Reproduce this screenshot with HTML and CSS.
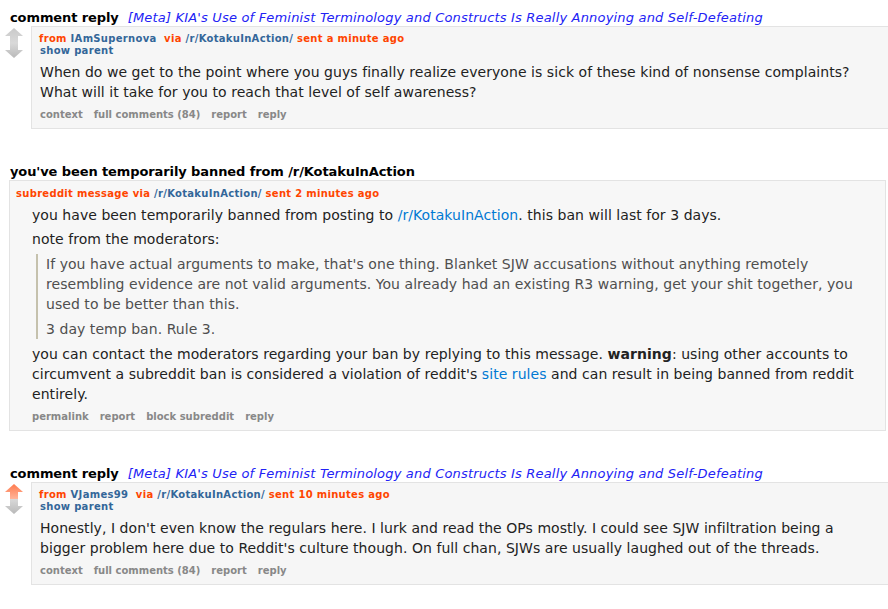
FILE: index.html
```html
<!DOCTYPE html>
<html>
<head>
<meta charset="utf-8">
<link rel="stylesheet" href="styles.css">
</head>
<body>
<div class="thing comment-thing">
  <p class="subject"><span class="kind">comment reply</span><a class="title" href="#">[Meta] KIA's Use of Feminist Terminology and Constructs Is Really Annoying and Self-Defeating</a></p>
  <div class="row">
    <div class="midcol">
      <svg class="arrow" width="18" height="15" viewBox="0 0 18 15"><defs><linearGradient id="g1" x1="0" y1="0" x2="0" y2="1"><stop offset="0" stop-color="#c9c9c9"/><stop offset="1" stop-color="#d9d9d9"/></linearGradient></defs><path d="M9 0 L18 8 L13 8 L13 15 L5 15 L5 8 L0 8 Z" fill="url(#g1)"/></svg>
      <svg class="arrow" width="18" height="15" viewBox="0 0 18 15"><defs><linearGradient id="g2" x1="0" y1="0" x2="0" y2="1"><stop offset="0" stop-color="#d9d9d9"/><stop offset="1" stop-color="#b9b9b9"/></linearGradient></defs><path d="M5 0 L13 0 L13 7 L18 7 L9 15 L0 7 L5 7 Z" fill="url(#g2)"/></svg>
    </div>
    <div class="entry">
      <p class="tagline"><span class="or">from</span> <a class="author" href="#">IAmSupernova</a>&nbsp; <span class="or">via</span> <a class="blue" href="#">/r/KotakuInAction/</a> <span class="or">sent a minute ago</span></p>
      <p class="parent"><a href="#">show parent</a></p>
      <div class="md">
        <p>When do we get to the point where you guys finally realize everyone is sick of these kind of nonsense complaints? What will it take for you to reach that level of self awareness?</p>
      </div>
      <ul class="buttons"><li>context</li><li>full comments (84)</li><li>report</li><li>reply</li></ul>
    </div>
  </div>
</div>

<div class="thing message-thing">
  <p class="subject"><span class="kind">you've been temporarily banned from /r/KotakuInAction</span></p>
  <div class="msgbox">
    <p class="tagline"><span class="or">subreddit message via</span> <a class="blue" href="#">/r/KotakuInAction/</a> <span class="or">sent 2 minutes ago</span></p>
    <div class="md msgmd">
      <p>you have been temporarily banned from posting to <a href="#">/r/KotakuInAction</a>. this ban will last for 3 days.</p>
      <p>note from the moderators:</p>
      <blockquote>
        <p>If you have actual arguments to make, that's one thing. Blanket SJW accusations without anything remotely resembling evidence are not valid arguments. You already had an existing R3 warning, get your shit together, you used to be better than this.</p>
        <p>3 day temp ban. Rule 3.</p>
      </blockquote>
      <p>you can contact the moderators regarding your ban by replying to this message. <strong>warning</strong>: using other accounts to circumvent a subreddit ban is considered a violation of reddit's <a href="#">site rules</a> and can result in being banned from reddit entirely.</p>
    </div>
    <ul class="buttons msgbuttons"><li>permalink</li><li>report</li><li>block subreddit</li><li>reply</li></ul>
  </div>
</div>

<div class="thing comment-thing">
  <p class="subject"><span class="kind">comment reply</span><a class="title" href="#">[Meta] KIA's Use of Feminist Terminology and Constructs Is Really Annoying and Self-Defeating</a></p>
  <div class="row">
    <div class="midcol">
      <svg class="arrow" width="18" height="15" viewBox="0 0 18 15"><defs><linearGradient id="g3" x1="0" y1="0" x2="0" y2="1"><stop offset="0" stop-color="#ff7a4d"/><stop offset="1" stop-color="#ffb59b"/></linearGradient></defs><path d="M9 0 L18 8 L13 8 L13 15 L5 15 L5 8 L0 8 Z" fill="url(#g3)"/></svg>
      <svg class="arrow" width="18" height="15" viewBox="0 0 18 15"><defs><linearGradient id="g4" x1="0" y1="0" x2="0" y2="1"><stop offset="0" stop-color="#d9d9d9"/><stop offset="1" stop-color="#b9b9b9"/></linearGradient></defs><path d="M5 0 L13 0 L13 7 L18 7 L9 15 L0 7 L5 7 Z" fill="url(#g4)"/></svg>
    </div>
    <div class="entry">
      <p class="tagline"><span class="or">from</span> <a class="author" href="#">VJames99</a>&nbsp; <span class="or">via</span> <a class="blue" href="#">/r/KotakuInAction/</a> <span class="or">sent 10 minutes ago</span></p>
      <p class="parent"><a href="#">show parent</a></p>
      <div class="md">
        <p>Honestly, I don't even know the regulars here. I lurk and read the OPs mostly. I could see SJW infiltration being a bigger problem here due to Reddit's culture though. On full chan, SJWs are usually laughed out of the threads.</p>
      </div>
      <ul class="buttons"><li>context</li><li>full comments (84)</li><li>report</li><li>reply</li></ul>
    </div>
  </div>
</div>
</body>
</html>
```

FILE: styles.css
```css
* { box-sizing: border-box; }
body {
  margin: 0;
  padding: 0;
  background: #fff;
  font-family: "DejaVu Sans", Verdana, sans-serif;
  color: #222;
  width: 888px;
  overflow: hidden;
}
a { text-decoration: none; }
p { margin: 0; }

.comment-thing { padding-top: 9px; }
.message-thing { padding-top: 34px; }
.message-thing + .comment-thing { padding-top: 34px; }

.subject {
  padding-left: 10px;
  font-size: 13px;
  line-height: 17px;
  white-space: nowrap;
}
.kind { font-weight: bold; color: #000; letter-spacing: -0.1px; }
.title {
  margin-left: 9px;
  font-style: italic;
  color: #2222f5;
  letter-spacing: 0.18px;
}

.row { display: flex; align-items: flex-start; }
.midcol {
  width: 31px;
  padding-left: 5px;
  padding-top: 2px;
  display: flex;
  flex-direction: column;
}
.arrow { display: block; }

.entry {
  flex: 1;
  background: #f6f6f6;
  border-top: 1px solid #e3e3e3;
  border-left: 1px solid #e3e3e3;
  border-bottom: 1px solid #e3e3e3;
  padding: 6px 0 6px 7px;
}

.tagline {
  font-size: 10px;
  line-height: 12px;
  font-weight: bold;
  letter-spacing: 0.3px;
}
.or { color: #ff4500; }
.author, .blue, .parent a { color: #369; }
.parent { font-size: 10px; line-height: 12px; font-weight: bold; padding-left: 1px; letter-spacing: 0.3px; }

.md {
  font-size: 14px;
  line-height: 20px;
  color: #222;
  padding-left: 1px;
  padding-right: 22px;
  margin-top: 5px;
  letter-spacing: 0.05px;
}
.md p { margin: 0 0 6px 0; }
.md a { color: #0079d3; }
.md strong { font-weight: bold; }

.buttons {
  list-style: none;
  margin: 0;
  padding: 0 0 0 1px;
  display: flex;
  font-size: 10px;
  line-height: 14px;
  font-weight: bold;
  color: #888;
  letter-spacing: 0;
}
.buttons li { margin-right: 11px; }

.msgbox {
  margin-left: 9px;
  margin-right: 2px;
  margin-top: 0;
  background: #f7f7f7;
  border: 1px solid #e3e3e3;
  padding: 7px 0 6px 6px;
}
.msgmd {
  margin-left: 15px;
  margin-top: 5px;
  margin-right: 0;
  padding-right: 16px;
}
.msgmd p { margin-bottom: 5px; }
.msgmd > p:first-child { margin-bottom: 4px; }
.msgbuttons { padding-left: 16px; margin-top: 6px; }
blockquote {
  margin: 0 0 5px 4px;
  padding: 0 0 0 8px;
  border-left: 2px solid #c5c1ad;
  color: #4f4f4f;
}
blockquote p { margin-bottom: 5px; }
blockquote p:last-child { margin-bottom: 0; }
```
